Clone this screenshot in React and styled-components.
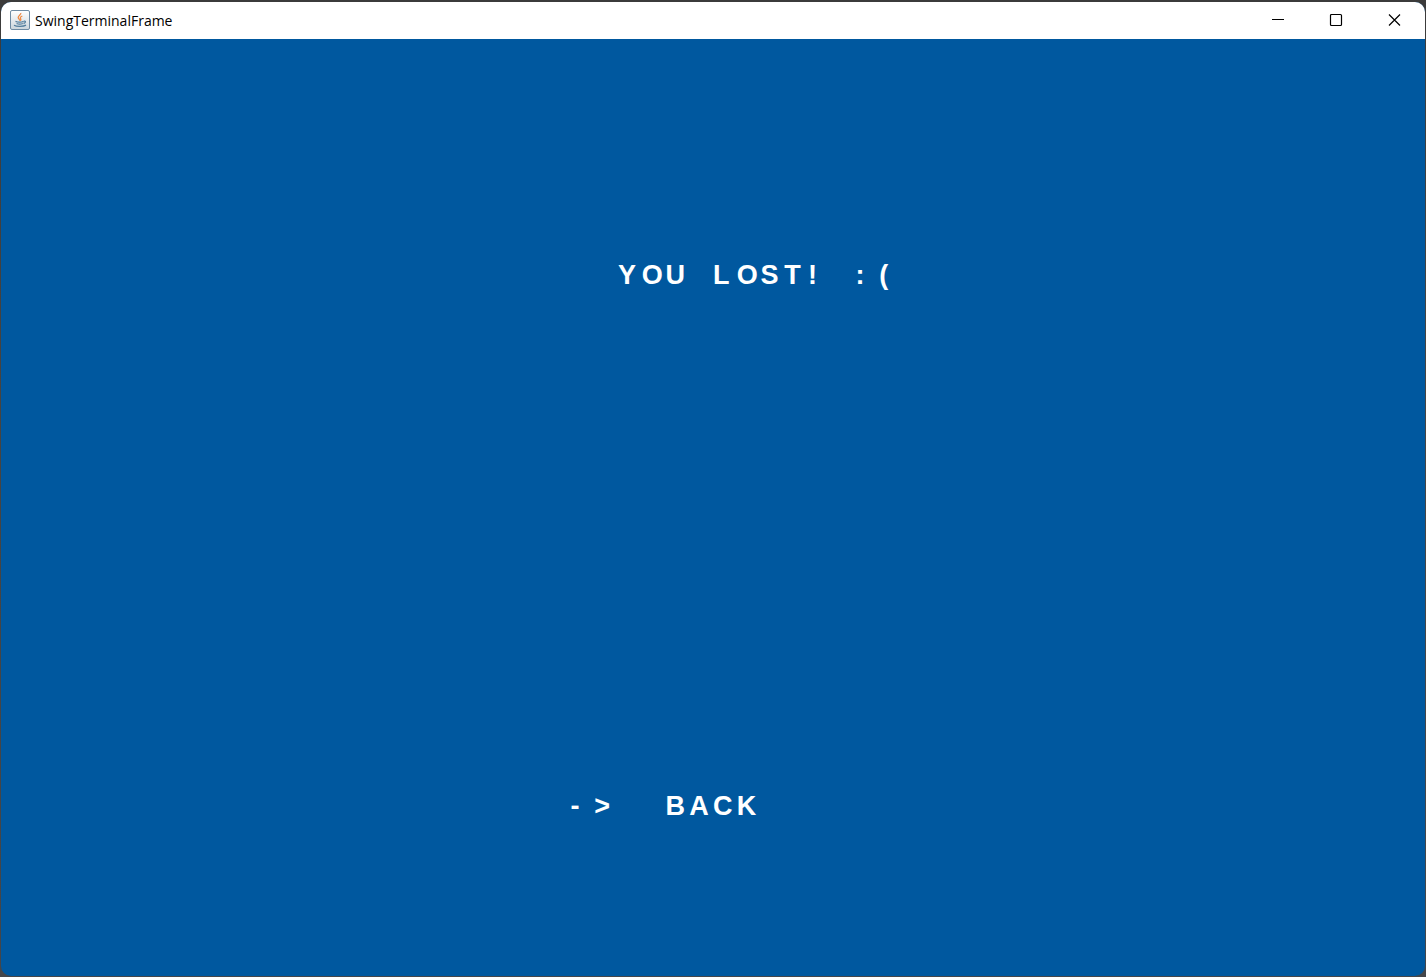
import React from "react";
import styled, { createGlobalStyle } from "styled-components";

const GlobalStyle = createGlobalStyle`
  * { box-sizing: border-box; }
  body { margin: 0; background: #3b3b3b; }
`;

const Desktop = styled.div`
  display: flex;
  min-height: 100vh;
  padding: 2px 1px 1px;
  background: linear-gradient(#3b3b3b, #484440 40%, #44464a);
`;

const Frame = styled.main`
  flex: 1;
  display: flex;
  flex-direction: column;
  overflow: hidden;
  border-radius: 10px;
  background: #00589f;
`;

const TitleBar = styled.header`
  display: flex;
  align-items: center;
  height: 37px;
  padding: 0 0 2px 9px;
  background: #ffffff;
`;

const Title = styled.h1`
  flex: 1;
  margin: 0 0 0 5px;
  padding-top: 2px;
  color: #000000;
  font: 400 14px/20px "Open Sans", "Noto Sans", sans-serif;
`;

const WindowButton = styled.button`
  display: grid;
  place-items: center;
  width: 58px;
  height: 35px;
  padding: 0;
  border: 0;
  background: transparent;
  color: #000000;
`;

const Controls = styled.div`
  display: flex;
  padding-right: 2px;
`;

const Screen = styled.section`
  flex: 1;
  display: grid;
  grid-template-columns: repeat(60, minmax(0, 1fr));
  grid-template-rows: repeat(30, minmax(0, 1fr));
`;

const Line = styled.div`
  display: grid;
  grid-template-columns: subgrid;
  grid-column: ${(p) => p.$col} / span ${(p) => p.$length};
  grid-row: ${(p) => p.$row};
  align-items: end;
  padding: 4px 0 0;
  border: 0;
  background: transparent;
  color: #ffffff;
  font: 700 27px/27px "Liberation Sans", Arial, sans-serif;
  text-align: left;
  white-space: pre;
`;

function JavaIcon() {
  return (
    <svg width="20" height="20" viewBox="0 0 20 20" aria-hidden="true">
      <defs>
        <linearGradient id="tile" x1="0" y1="0" x2="0" y2="1">
          <stop offset="0" stopColor="#ffffff" />
          <stop offset="1" stopColor="#cbd5dc" />
        </linearGradient>
      </defs>
      <rect x="0.5" y="0.5" width="19" height="19" rx="1.5" fill="url(#tile)" stroke="#6f8ba3" />
      <path d="M10.8 3c.6 1.700-3 2.700-2.600 4.700.2 1 1.600 1.600 1.600 3M12.300 6c-1.800.8-2.500 1.600-1.600 2.800.5.800.1 1.400-.5 2" fill="none" stroke="#ee8a45" strokeWidth="1.300" />
      <path d="M5.500 11.300c2 .9 6.200.9 8.200 0M6.600 13.500c1.600.7 4.600.7 6.200 0M14 11.200c2-.5 1.900 1.800-.5 2.300M4 15.300c2.500 1.500 9.500 1.500 12-.2" fill="none" stroke="#557f9e" strokeWidth="1.300" />
    </svg>
  );
}

const controls = [
  { label: "Minimize", shape: <path d="M0 6.500h12" /> },
  { label: "Maximize", shape: <rect x="0.5" y="1.500" width="11" height="11" rx="1" /> },
  { label: "Close", shape: <path d="M1 1.500l11 11M12 1.500l-11 11" /> },
];

function TerminalLine({ text, ...rest }) {
  return (
    <Line $length={text.length} {...rest}>
      {[...text].map((char, i) => (
        <span key={i}>{char}</span>
      ))}
    </Line>
  );
}

export default function App() {
  return (
    <>
      <GlobalStyle />
      <Desktop>
        <Frame>
          <TitleBar>
            <JavaIcon />
            <Title>SwingTerminalFrame</Title>
            <Controls>
              {controls.map(({ label, shape }) => (
                <WindowButton key={label} type="button" aria-label={label}>
                  <svg width="12" height="14" viewBox="0 0 12 14" overflow="visible" fill="none" stroke="currentColor" strokeWidth="1.200">
                    {shape}
                  </svg>
                </WindowButton>
              ))}
            </Controls>
          </TitleBar>
          <Screen>
            <TerminalLine text="YOU LOST! :(" $col={27} $row={8} />
            <TerminalLine as="button" type="button" text="->  BACK" $col={25} $row={25} />
          </Screen>
        </Frame>
      </Desktop>
    </>
  );
}
